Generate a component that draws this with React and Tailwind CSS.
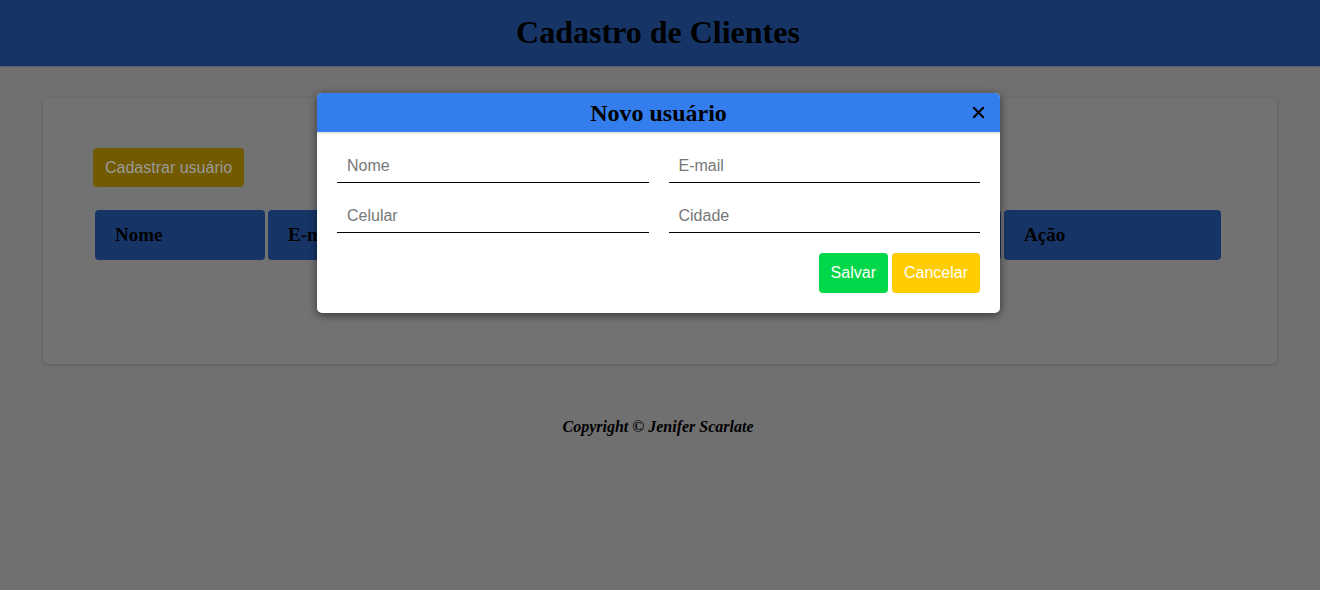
import { X } from "lucide-react";

const serif = { fontFamily: '"Liberation Serif", "Times New Roman", serif' };
const sans = { fontFamily: '"Liberation Sans", Arial, sans-serif' };

const COLS = [
  { label: "Nome", w: "w-[170px]" },
  { label: "E-mail", w: "w-[243px]" },
  { label: "Celular", w: "w-[243px]" },
  { label: "Cidade", w: "w-[241px]" },
  { label: "Ação", w: "w-[217px]" },
];

function Field({ placeholder }) {
  return (
    <input
      placeholder={placeholder}
      className="w-full h-[34px] px-[10px] bg-transparent border-b border-black text-[16px] text-[#333] placeholder:text-[#777] outline-none"
      style={sans}
    />
  );
}

function Modal() {
  return (
    <div className="absolute left-[317px] top-[93px] w-[683px] bg-white rounded-[5px] shadow-[0_2px_8px_rgba(0,0,0,0.55)] overflow-hidden">
      <div className="relative h-[41px] bg-[#347dec] border-b-[2px] border-[#e6e6e6] flex items-center justify-center">
        <h2 className="text-[24px] font-bold text-black leading-none" style={serif}>
          Novo usuário
        </h2>
        <button className="absolute right-[12px] top-[10px] text-black">
          <X size={19} strokeWidth={2.4} />
        </button>
      </div>
      <div className="px-[20px] pt-[15px] pb-[20px]">
        <div className="grid grid-cols-2 gap-x-[20px] gap-y-[16px]">
          <Field placeholder="Nome" />
          <Field placeholder="E-mail" />
          <Field placeholder="Celular" />
          <Field placeholder="Cidade" />
        </div>
        <div className="flex justify-end gap-[4px] mt-[20px]">
          <button className="h-[40px] px-[12px] rounded-[4px] bg-[#00d84a] text-white text-[16px]" style={sans}>
            Salvar
          </button>
          <button className="h-[40px] px-[12px] rounded-[4px] bg-[#ffcc00] text-white text-[16px]" style={sans}>
            Cancelar
          </button>
        </div>
      </div>
    </div>
  );
}

export default function App() {
  return (
    <div className="relative w-[1320px] h-[590px] bg-[#707070] overflow-hidden">
      <header className="h-[67px] bg-[#163566] border-b border-[#5a5f6a] flex items-center justify-center pb-[2px] pr-[4px]">
        <h1 className="text-[32px] font-bold text-black leading-none" style={serif}>
          Cadastro de Clientes
        </h1>
      </header>

      <main className="px-[43px] pt-[31px]">
        <section className="h-[266px] bg-[#727272] rounded-[5px] shadow-[0_1px_4px_rgba(0,0,0,0.18)] px-[50px] pt-[50px]">
          <button
            className="h-[39px] px-[12px] rounded-[4px] bg-[#725a00] text-[#9b9b9b] text-[16px]"
            style={sans}
          >
            Cadastrar usuário
          </button>
          <div className="flex gap-[3px] mt-[23px] ml-[2px]">
            {COLS.map((c) => (
              <div
                key={c.label}
                className={`${c.w} h-[50px] bg-[#163566] rounded-[4px] flex items-center px-[20px] text-[19px] font-bold text-black`}
                style={serif}
              >
                {c.label}
              </div>
            ))}
          </div>
        </section>

        <footer className="mt-[51px] flex justify-center">
          <p className="text-[16px] font-bold italic text-black pr-[4px]" style={serif}>
            Copyright © Jenifer Scarlate
          </p>
        </footer>
      </main>

      <Modal />
    </div>
  );
}
